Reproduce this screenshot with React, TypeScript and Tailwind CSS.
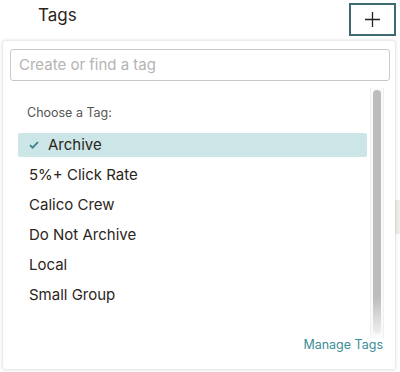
import React from "react";

const TAGS = ["Archive", "5%+ Click Rate", "Calico Crew", "Do Not Archive", "Local", "Small Group"];

export default function App() {
  return (
    <div className="relative h-[372px] w-[400px] overflow-hidden bg-white font-['Inter',sans-serif] text-[#2b2520]">
      {/* Header */}
      <div className="flex h-[40px] items-start">
        <span className="ml-[38px] mt-[4px] text-[17px] leading-[22px]">Tags</span>
        <button className="ml-auto mr-[4px] mt-[3px] flex h-[33px] w-[47px] items-center justify-center border-2 border-[#3e6a72] bg-white">
          <svg width="17" height="17" viewBox="0 0 17 17">
            <path d="M8.5 1v15M1 8.5h15" stroke="#222" strokeWidth="1.3" />
          </svg>
        </button>
      </div>

      {/* peeking element behind panel */}
      <div className="absolute left-[392px] top-[200px] h-[34px] w-[8px] bg-[#efeeea]" />

      {/* Dropdown panel */}
      <div className="relative ml-[3px] mt-[1px] h-[328px] w-[392px] rounded-[2px] bg-white shadow-[0_0_3px_1px_rgba(0,0,0,0.13)]">
        <div className="px-[7px] pt-[8px]">
          <div className="flex h-[32px] w-[380px] items-center rounded-[3px] border border-[#c8c8c8] px-[8px]">
            <span className="text-[15px] text-[#b4b4b4]">Create or find a tag</span>
          </div>
        </div>
        <div className="flex">
          <div className="w-[364px] pl-[15px]">
            <div className="pl-[9px] pt-[23px] text-[12.5px] leading-[17px] text-[#555]">Choose a Tag:</div>
            <ul className="mt-[12px]">
              {TAGS.map((t, i) => (
                <li
                  key={t}
                  className={`flex h-[24px] items-center text-[15px] ${i === 0 ? "rounded-[2px] bg-[#cce5e6]" : ""} ${i > 0 ? "mt-[6px]" : ""}`}
                >
                  {i === 0 ? (
                    <>
                      <svg className="ml-[11px]" width="10" height="8" viewBox="0 0 10 8">
                        <path d="M1 4.2l2.6 2.5L9 1.2" fill="none" stroke="#3b8690" strokeWidth="1.8" />
                      </svg>
                      <span className="ml-[9px]">{t}</span>
                    </>
                  ) : (
                    <span className="ml-[11px]">{t}</span>
                  )}
                </li>
              ))}
            </ul>
          </div>
          {/* scrollbar */}
          <div className="ml-[3px] mt-[7px] flex h-[250px] w-[14px] justify-center border-x border-[#f0f0f0] bg-[#fafafa] pt-[2px]">
            <div className="h-[244px] w-[8px] rounded-full bg-gradient-to-b from-[#bdbdbd] via-[#bdbdbd] via-85% to-[#f0f0f0]" />
          </div>
        </div>
        <div className="absolute bottom-[14px] right-[12px] text-[12.5px] text-[#3b8d97]">Manage Tags</div>
      </div>
    </div>
  );
}
